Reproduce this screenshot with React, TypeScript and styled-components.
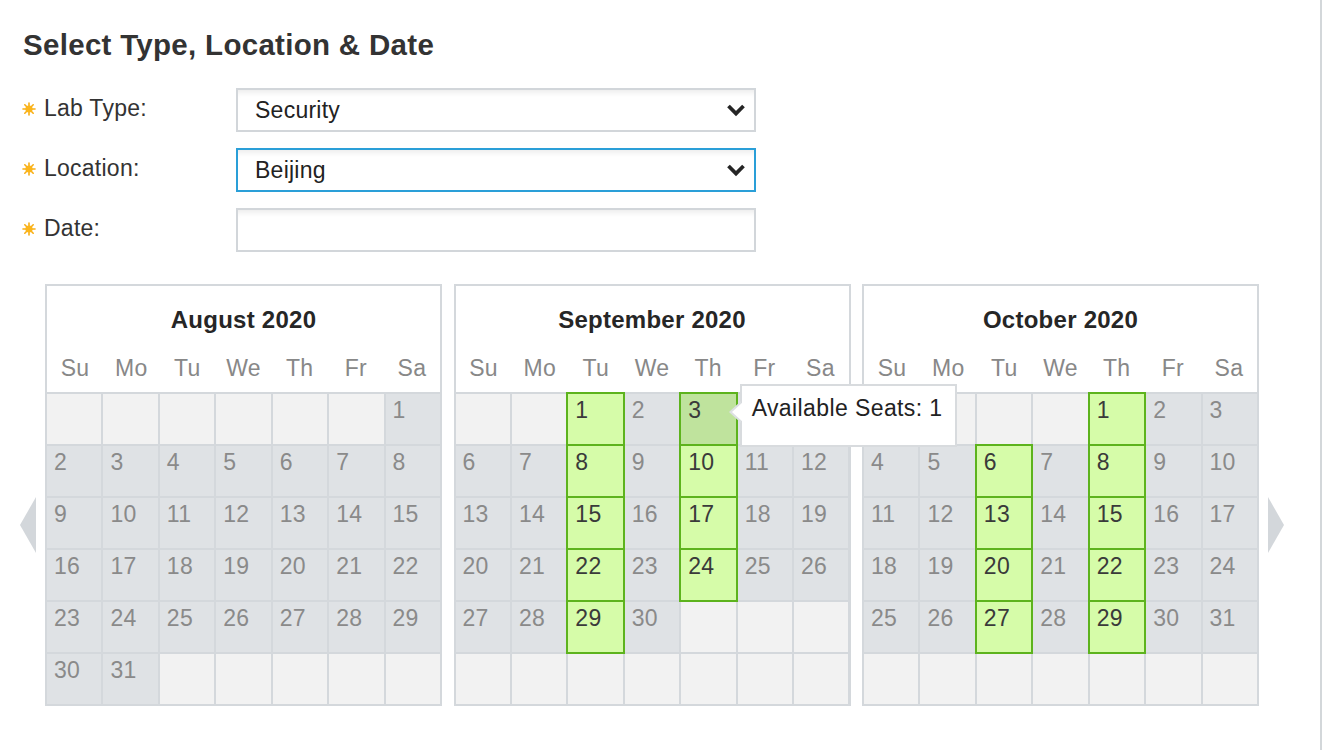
import { FC } from "react";
import styled, { createGlobalStyle } from "styled-components";

const GlobalStyle = createGlobalStyle`
    body {
        margin: 0;
        background: #ffffff;
        font-family: "Liberation Sans", Arial, Helvetica, sans-serif;
        letter-spacing: 0.25px;
        color: #2b2b2b;
    }
`;

const LINE = "#d4d8dc";

const Page = styled.div`
    display: flex;
    min-height: 750px;
`;

const Main = styled.main`
    width: 1322px;
    box-sizing: border-box;
    border-right: 2px solid #d3d7da;
    padding-left: 20px;
`;

const Title = styled.h1`
    margin: 28px 0 0 3px;
    font-size: 29.5px;
    line-height: 33px;
    letter-spacing: 0.3px;
    font-weight: bold;
    color: #333333;
`;

const Form = styled.div`
    display: flex;
    flex-direction: column;
    gap: 16px;
    margin-top: 27px;
`;

const FormRow = styled.div`
    display: flex;
    align-items: center;
    height: 44px;
`;

const Label = styled.label`
    width: 216px;
    display: flex;
    align-items: center;
    gap: 8px;
    padding-bottom: 3px;
    font-size: 23px;
    color: #333333;
`;

const Required = styled.svg`
    margin-left: 2px;
    flex: none;
`;

interface BoxProps {
    focused?: boolean;
}

const SelectBox = styled.div<BoxProps>`
    width: 520px;
    height: 44px;
    box-sizing: border-box;
    display: flex;
    align-items: center;
    justify-content: space-between;
    padding: 0 8px 0 17px;
    border: 2px solid ${(props) => (props.focused ? "#2a9fd8" : "#d2d6da")};
    background: #ffffff;
    box-shadow: inset 0 7px 6px -5px rgba(0, 0, 0, 0.09);
    font-size: 23px;
    color: #222222;
`;

const CalendarRow = styled.div`
    display: flex;
    align-items: flex-start;
    margin-top: 32px;
`;

const NavArrow = styled.svg`
    flex: none;
    margin-top: 213px;
`;

const Panels = styled.div`
    display: flex;
    gap: 11.5px;
    margin: 0 9px 0 9px;
`;

const Panel = styled.div`
    width: 397px;
    box-sizing: border-box;
    border: 2px solid ${LINE};
    background: #ffffff;
`;

const PanelHead = styled.div`
    padding: 20px 0 10px;
`;

const MonthName = styled.div`
    text-align: center;
    font-size: 24px;
    line-height: 28px;
    font-weight: bold;
    color: #262626;
`;

const WeekDays = styled.div`
    display: grid;
    grid-template-columns: repeat(7, 1fr);
    margin-top: 20px;
`;

const WeekDay = styled.div`
    text-align: center;
    font-size: 23px;
    line-height: 28px;
    color: #888888;
`;

const DayGrid = styled.div`
    display: grid;
    grid-template-columns: repeat(7, 1fr);
    grid-auto-rows: 50px;
    gap: 2px;
    border-top: 2px solid ${LINE};
    background: ${LINE};
`;

type CellKind = "empty" | "off" | "open" | "active";

const cellBg: Record<CellKind, string> = {
    empty: "#f2f2f2",
    off: "#dfe2e5",
    open: "#d6fca9",
    active: "#bfe39d",
};

const DayCell = styled.div<{ kind: CellKind }>`
    position: relative;
    padding: 3px 7px;
    font-size: 23px;
    line-height: 26px;
    background: ${(props) => cellBg[props.kind]};
    color: ${(props) =>
        props.kind === "open" || props.kind === "active" ? "#3a3a3a" : "#8a8a8a"};
    ${(props) =>
        props.kind === "open" || props.kind === "active"
            ? "box-shadow: 0 0 0 2px #5db31d; z-index: 1;"
            : ""}
    ${(props) => (props.kind === "active" ? "z-index: 5;" : "")}
`;

const Tooltip = styled.div`
    position: absolute;
    left: calc(100% + 4px);
    top: -10px;
    padding: 9px 12px 24px 10px;
    border: 2px solid #d8dbde;
    background: #ffffff;
    font-size: 23px;
    line-height: 26px;
    letter-spacing: 0.4px;
    color: #222222;
    white-space: nowrap;
    z-index: 10;

    &::before,
    &::after {
        content: "";
        position: absolute;
        top: 15px;
        border-style: solid;
        border-color: transparent;
    }
    &::before {
        left: -13px;
        border-width: 11px 12px 11px 0;
        border-right-color: #dde0e3;
    }
    &::after {
        left: -10px;
        top: 16px;
        border-width: 10px 11px 10px 0;
        border-right-color: #ffffff;
    }
`;

interface MonthData {
    name: string;
    start: number;
    days: number;
    open: number[];
    active?: number;
}

const months: MonthData[] = [
    { name: "August 2020", start: 6, days: 31, open: [] },
    {
        name: "September 2020",
        start: 2,
        days: 30,
        open: [1, 8, 15, 22, 29, 10, 17, 24],
        active: 3,
    },
    {
        name: "October 2020",
        start: 4,
        days: 31,
        open: [6, 13, 20, 27, 1, 8, 15, 22, 29],
    },
];

const weekDays = ["Su", "Mo", "Tu", "We", "Th", "Fr", "Sa"];

const Sunburst: FC = () => (
    <Required width="14" height="14" viewBox="0 0 14 14">
        <g stroke="#f8ae14" strokeWidth="1.6" strokeLinecap="round">
            <line x1="7" y1="1" x2="7" y2="13" />
            <line x1="1" y1="7" x2="13" y2="7" />
            <line x1="2.8" y1="2.8" x2="11.2" y2="11.2" />
            <line x1="11.2" y1="2.8" x2="2.8" y2="11.2" />
        </g>
        <circle cx="7" cy="7" r="3.6" fill="#fbb51a" />
    </Required>
);

const Chevron: FC = () => (
    <svg width="20" height="14" viewBox="0 0 20 14">
        <polyline
            points="2.5,3 10,10.5 17.5,3"
            fill="none"
            stroke="#252525"
            strokeWidth="3.8"
        />
    </svg>
);

const Month: FC<{ data: MonthData }> = ({ data }) => {
    const cells = Array.from({ length: 42 }, (_, i) => {
        const day = i - data.start + 1;
        if (day < 1 || day > data.days) {
            return { day: 0, kind: "empty" as CellKind };
        }
        let kind: CellKind = "off";
        if (data.active === day) kind = "active";
        else if (data.open.includes(day)) kind = "open";
        return { day, kind };
    });

    return (
        <Panel>
            <PanelHead>
                <MonthName>{data.name}</MonthName>
                <WeekDays>
                    {weekDays.map((d) => (
                        <WeekDay key={d}>{d}</WeekDay>
                    ))}
                </WeekDays>
            </PanelHead>
            <DayGrid>
                {cells.map((c, idx) => (
                    <DayCell key={idx} kind={c.kind}>
                        {c.day > 0 ? c.day : ""}
                        {c.kind === "active" && (
                            <Tooltip>Available Seats: 1</Tooltip>
                        )}
                    </DayCell>
                ))}
            </DayGrid>
        </Panel>
    );
};

export default function App() {
    return (
        <Page>
            <GlobalStyle />
            <Main>
                <Title>Select Type, Location &amp; Date</Title>
                <Form>
                    <FormRow>
                        <Label>
                            <Sunburst />
                            Lab Type:
                        </Label>
                        <SelectBox>
                            Security
                            <Chevron />
                        </SelectBox>
                    </FormRow>
                    <FormRow>
                        <Label>
                            <Sunburst />
                            Location:
                        </Label>
                        <SelectBox focused>
                            Beijing
                            <Chevron />
                        </SelectBox>
                    </FormRow>
                    <FormRow>
                        <Label>
                            <Sunburst />
                            Date:
                        </Label>
                        <SelectBox />
                    </FormRow>
                </Form>
                <CalendarRow>
                    <NavArrow width="16" height="56" viewBox="0 0 16 56">
                        <polygon points="16,0 0,28 16,56" fill="#d3d7db" />
                    </NavArrow>
                    <Panels>
                        {months.map((m) => (
                            <Month key={m.name} data={m} />
                        ))}
                    </Panels>
                    <NavArrow width="16" height="56" viewBox="0 0 16 56">
                        <polygon points="0,0 16,28 0,56" fill="#d3d7db" />
                    </NavArrow>
                </CalendarRow>
            </Main>
        </Page>
    );
}
